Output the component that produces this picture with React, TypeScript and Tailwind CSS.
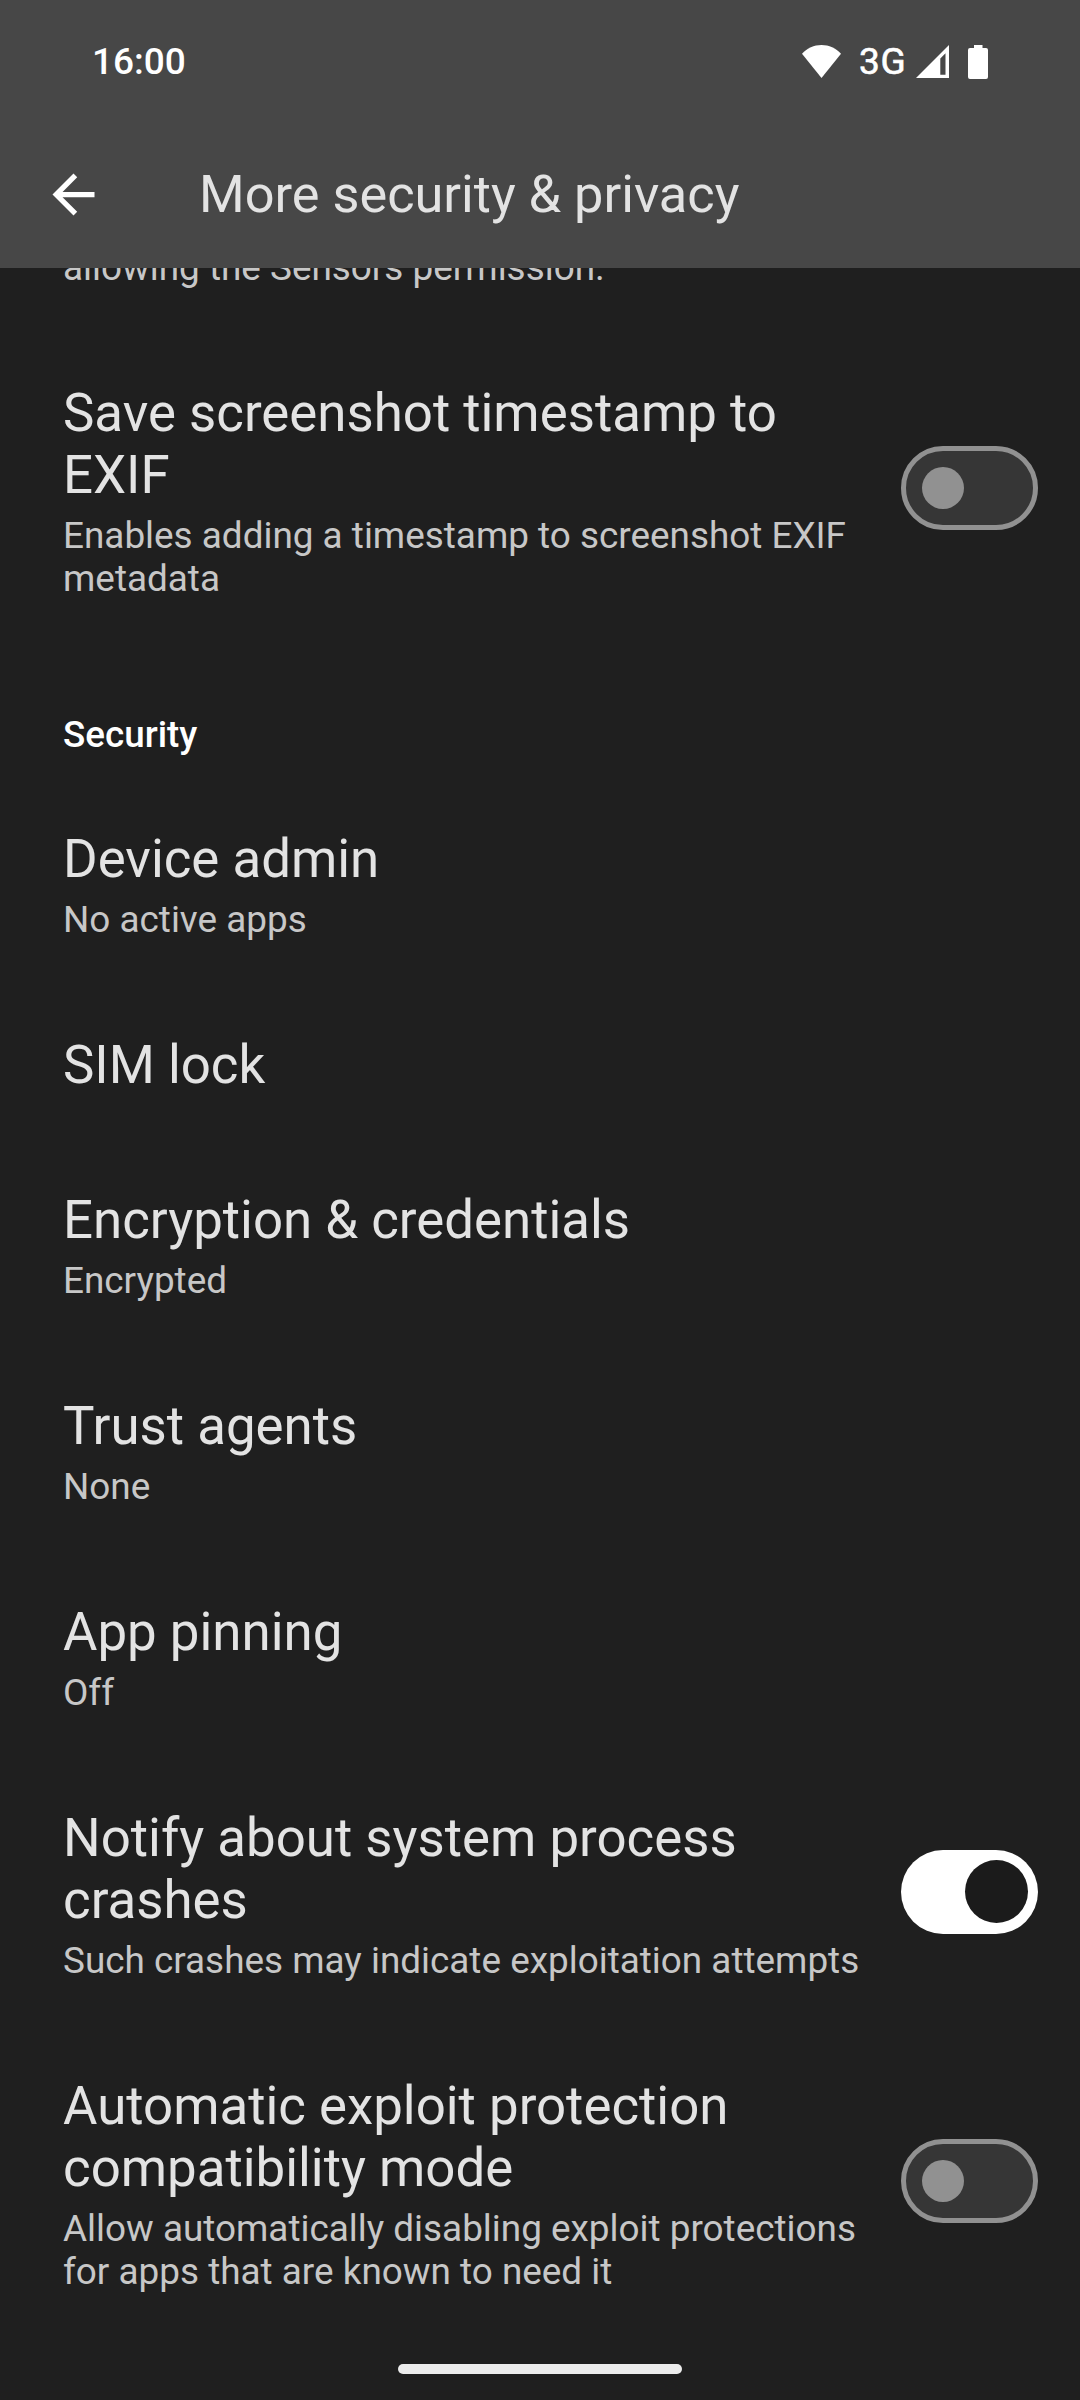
import React from "react";

function Switch({ on }: { on: boolean }) {
  return on ? (
    <div className="relative mb-1.5 h-[84px] w-[137px] shrink-0 rounded-full bg-white">
      <div className="absolute right-[10.5px] top-[10.5px] size-[63px] rounded-full bg-[#1b1b1b]" />
    </div>
  ) : (
    <div className="relative mb-1.5 h-[84px] w-[137px] shrink-0 rounded-full border-[5px] border-[#919191] bg-[#363636]">
      <div className="absolute left-4 top-4 size-[42px] rounded-full bg-[#919191]" />
    </div>
  );
}

function Row({ title, sub, on }: { title: string[]; sub?: string[]; on?: boolean }) {
  return (
    <div className="flex items-center justify-between pb-[47px] pl-[63px] pr-[42px] pt-[46px]">
      <div className="whitespace-nowrap">
        {title.map((t) => (
          <div key={t} className="text-[52.8px] leading-[62px] text-[#e3e3e3]">{t}</div>
        ))}
        {sub && (
          <div className="pt-2">
            {sub.map((t) => (
              <div key={t} className="text-[36.88px] leading-[43px] text-[#c7c7c7]">{t}</div>
            ))}
          </div>
        )}
      </div>
      {on !== undefined && <Switch on={on} />}
    </div>
  );
}

export default function App() {
  return (
    <div className="relative flex h-[2400px] w-[1080px] flex-col overflow-hidden bg-[#1f1f1f] font-[Roboto,sans-serif]">
      <header className="h-[268px] shrink-0 bg-[#474747] text-white">
        <div className="flex h-[121px] items-start justify-between pl-[92px] pr-[92px] pt-[40px]">
          <span className="text-[37px] font-medium leading-[43px]">16:00</span>
          <div className="flex items-start">
            <svg className="mt-[5px] h-[33px] w-[39px]" viewBox="0 0 39 33" fill="#fff">
              <path d="M0 8.7C5.2 3.4 12 0 19.5 0S33.8 3.4 39 8.7L19.5 33z" />
            </svg>
            <span className="ml-[18px] w-[48px] text-[37px] leading-[43px] tracking-[0.8px] [-webkit-text-stroke:0.6px_white]">3G</span>
            <svg className="ml-[9px] mt-[5px] h-[33px] w-[33px]" viewBox="0 0 33 33" fill="#fff">
              <path fillRule="evenodd" d="M33 0V33H0zM29.5 8.2L24.3 13.4V29.7H29.5z" />
            </svg>
            <svg className="ml-[19px] mt-[5px] h-[34px] w-5" viewBox="0 0 20 34" fill="#fff">
              <path d="M6 0h8.5v3H18a2 2 0 0 1 2 2v27a2 2 0 0 1-2 2H2a2 2 0 0 1-2-2V5a2 2 0 0 1 2-2h4z" />
            </svg>
          </div>
        </div>
        <div className="flex items-start pl-[42px] pt-[42px]">
          <svg className="size-[63px]" viewBox="0 0 24 24" fill="#fff"><path d="M20 11H7.83l5.59-5.59L12 4l-8 8 8 8 1.41-1.41L7.83 13H20v-2z" /></svg>
          <span className="ml-[94px] text-[52.3px] leading-[62px] text-[#e3e3e3]">More security &amp; privacy</span>
        </div>
      </header>
      <main>
        <div className="flex h-[68px] items-start overflow-hidden pl-[63px]">
          <div className="-mt-[22px] whitespace-nowrap text-[36.88px] leading-[43px] text-[#c7c7c7]">allowing the Sensors permission.</div>
        </div>
        <Row title={["Save screenshot timestamp to", "EXIF"]} sub={["Enables adding a timestamp to screenshot EXIF", "metadata"]} on={false} />
        <div className="h-[135px] pl-[63px] pt-[66px] text-[36.8px] font-medium leading-[43px] text-white">Security</div>
        <Row title={["Device admin"]} sub={["No active apps"]} />
        <Row title={["SIM lock"]} />
        <Row title={["Encryption & credentials"]} sub={["Encrypted"]} />
        <Row title={["Trust agents"]} sub={["None"]} />
        <Row title={["App pinning"]} sub={["Off"]} />
        <Row title={["Notify about system process", "crashes"]} sub={["Such crashes may indicate exploitation attempts"]} on />
        <Row title={["Automatic exploit protection", "compatibility mode"]} sub={["Allow automatically disabling exploit protections", "for apps that are known to need it"]} on={false} />
      </main>
      <div className="absolute left-[398px] top-[2364px] h-[10px] w-[284px] rounded-full bg-[#ececec]" />
    </div>
  );
}
